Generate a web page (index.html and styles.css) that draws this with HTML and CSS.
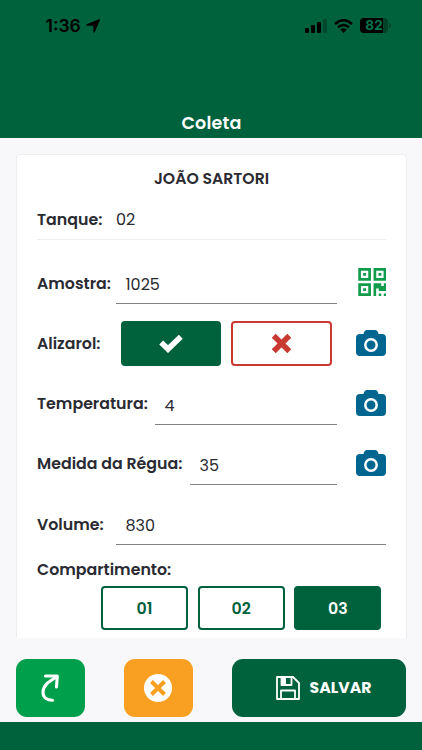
FILE: index.html
```html
<!DOCTYPE html>
<html lang="pt-BR">
<head>
<meta charset="utf-8">
<meta name="viewport" content="width=device-width, initial-scale=1">
<title>Coleta</title>
<link rel="stylesheet" href="styles.css">
</head>
<body>
<svg class="defs" aria-hidden="true">
  <symbol id="camera" viewBox="0 0 30 26">
    <path fill="#00658f" d="M4 4h3.400l1-2.400Q9 0 10.800 0h8.400q1.800 0 2.400 1.600L22.600 4H26q4 0 4 4v14q0 4-4 4H4q-4 0-4-4V8q0-4 4-4z"/>
    <circle cx="15" cy="15" r="5.700" fill="none" stroke="#fff" stroke-width="2.500"/>
  </symbol>
</svg>
<header class="top">
  <div class="status">
    <span class="time">1:36</span>
    <svg class="location" viewBox="0 0 14 14"><path d="M13 .2Q14.200 0 13.800 1.200L8.800 13Q7.900 14.500 7.400 13V7.200Q7.300 6.700 6.700 6.700H1Q-.5 6.100.8 5.200z"/></svg>
    <svg class="signal" viewBox="0 0 22 14"><rect y="9" width="4" height="5" rx="1"/><rect x="6" y="6" width="4" height="8" rx="1"/><rect x="12" y="3" width="4" height="11" rx="1"/><rect x="18" width="4" height="14" rx="1" opacity=".25"/></svg>
    <svg class="wifi" viewBox="0 0 19 14"><g fill="none" stroke="#000" stroke-width="2.500"><path d="M1 5Q9.500-2.600 18 5"/><path d="M4 8.300Q9.500 3.600 15 8.300"/></g><path d="M6.300 10.600Q9.500 8 12.700 10.600L9.500 14z"/></svg>
    <span class="battery">82</span><span class="nub"></span>
  </div>
  <h1 class="page-title">Coleta</h1>
</header>
<main class="content">
  <section class="card">
    <h2 class="producer">JOÃO SARTORI</h2>
    <div class="row tank"><span class="label l-tank">Tanque:</span><span class="plain">02</span></div>
    <div class="row sample">
      <span class="label l-sample">Amostra:</span><span class="field v-sample">1025</span>
      <svg class="qr" viewBox="0 0 28 28"><g fill="none" stroke="#119c4b" stroke-width="2.700"><path d="M1.350 1.350h10v10h-10zM16.650 1.350h10v10h-10zM1.350 16.650h10v10h-10z"/></g><path fill="#119c4b" d="M4.900 4.900h2.900v2.900H4.900zM20.200 4.900h2.900v2.900h-2.900zM4.900 20.200h2.900v2.900H4.900zM15.300 15.300h7.700v2.700h2.500v-2.700H28V23h-7.500v-2.500h-2.600V28h-2.600zM20.500 25.500H23V28h-2.500zM25.500 25.500H28V28h-2.500z"/></svg>
    </div>
    <div class="row alizarol">
      <span class="label l-aliz">Alizarol:</span>
      <button class="choice yes" aria-label="Sim"><svg viewBox="0 0 24 19"><path d="M2.200 8.500l6.800 6.500L21.800 2.700" fill="none" stroke="#fff" stroke-width="5.600"/></svg></button>
      <button class="choice no" aria-label="Não"><svg viewBox="0 0 19 19"><path d="M3.700 3.700l11.600 11.600M15.300 3.700L3.700 15.300" fill="none" stroke="#c83a31" stroke-width="5.600" stroke-linecap="square"/></svg></button>
      <svg class="camera"><use href="#camera"/></svg>
    </div>
    <div class="row temp"><span class="label l-temp">Temperatura:</span><span class="field">4</span><svg class="camera"><use href="#camera"/></svg></div>
    <div class="row ruler"><span class="label l-ruler">Medida da Régua:</span><span class="field v-ruler">35</span><svg class="camera"><use href="#camera"/></svg></div>
    <div class="row volume"><span class="label l-volume">Volume:</span><span class="field v-volume">830</span></div>
    <div class="label l-comp">Compartimento:</div>
    <div class="compartments"><button class="comp c1">01</button><button class="comp">02</button><button class="comp selected">03</button></div>
  </section>
</main>
<footer class="actions">
  <button class="action redo" aria-label="Refazer"><svg viewBox="0 0 18 28"><g fill="none" stroke="#fff" stroke-width="3.100" stroke-linecap="round" stroke-linejoin="round"><path d="M4.500 2h11.800l-.8 11"/><path d="M15.500 3C9 7 2 10.500 2 18.500c0 4.500 3.500 7.700 9.500 7.700"/></g></svg></button>
  <button class="action cancel" aria-label="Cancelar"><svg viewBox="0 0 28 28"><circle cx="14" cy="14" r="14" fill="#fff"/><path d="M7.500 7.500l13 13M20.500 7.500l-13 13" stroke="#f9a023" stroke-width="4"/></svg></button>
  <button class="action save"><svg viewBox="0 0 24 24"><g fill="none" stroke="#fff" stroke-width="1.800" stroke-linejoin="round"><path d="M1 1h16l6 6v16H1z"/><path d="M5.500 1v8h10V1M5 23v-8.500h14V23"/></g><path fill="#fff" d="M5.500 1H10v7H5.500z"/></svg><span class="save-text">SALVAR</span></button>
</footer>
<div class="bottom"></div>
</body>
</html>
```
FILE: styles.css
```css
* { box-sizing: border-box; }
body { margin: 0; width: 422px; height: 750px; overflow: hidden; display: flex; flex-direction: column; background: #f8f8fa; color: #2a2a32; font-family: Poppins, Inter, sans-serif; }
button { font: inherit; padding: 0; margin: 0; display: flex; align-items: center; justify-content: center; }
svg { display: block; flex: none; }
.defs { position: absolute; width: 0; height: 0; }
.top { height: 137.5px; flex: none; background: #00613d; }
.status { height: 50px; padding: 1px 0 0 45.500px; display: flex; align-items: center; }
.status svg { fill: #000; }
.time { width: 40.500px; padding-top: 1px; font-family: Inter, sans-serif; font-size: 17.500px; font-weight: 600; color: #000; line-height: 18px; white-space: nowrap; }
.location { width: 14px; height: 14px; }
.signal { width: 22px; height: 14px; margin-left: 204.500px; }
.wifi { width: 19px; height: 14px; margin-left: 7.500px; }
.battery { width: 28px; height: 15px; margin-left: 7px; border-radius: 4px; background: linear-gradient(90deg, #000 83%, #004129 83%); color: #04744b; font-family: Inter, sans-serif; font-size: 13.500px; line-height: 15px; font-weight: 700; text-align: center; }
.nub { width: 2px; height: 5px; margin-left: 1px; background: #004129; border-radius: 0 2px 2px 0; }
.page-title { margin: 60.500px 0 0 1px; text-align: center; color: #fff; font-size: 17.500px; line-height: 25px; font-weight: 600; letter-spacing: .2px; }
.content { height: 500.500px; flex: none; padding: 16px 15.500px 0 16px; overflow: hidden; }
.card { height: 520px; padding: 11px 19.500px 0 20px; background: #fff; border: 1px solid #ededf0; border-radius: 4px; }
.producer { margin: 0; height: 26px; text-align: center; line-height: 26px; font-size: 15.700px; font-weight: 600; }
.row { display: flex; align-items: center; }
.label { flex: none; font-size: 15.800px; font-weight: 600; line-height: 24px; white-space: nowrap; }
.plain, .field { font-size: 16px; line-height: 24px; font-weight: 400; }
.tank { height: 42px; margin-top: 6.500px; padding-top: 2px; border-bottom: 1.500px solid #eeeef0; }
.l-tank { width: 79px; }
.sample { height: 44.500px; margin-top: 20px; }
.field { height: 44px; padding: 13px 0 0 9.500px; flex: none; width: 221px; border-bottom: 1.500px solid #808085; }
.l-sample, .l-volume { width: 79px; }
.l-sample, .l-temp, .l-ruler, .l-volume { padding-top: 3px; }
.qr { width: 28.500px; height: 28px; margin-left: auto; }
.alizarol { height: 45px; margin-top: 16.500px; }
.l-aliz { width: 83.500px; }
.choice { width: 100.500px; height: 44.500px; border-radius: 4px; margin-right: 10px; }
.yes { background: #00613d; border: 0; }
.yes svg { width: 24px; height: 19px; }
.no { background: #fff; border: 2px solid #c83a31; }
.no svg { width: 19px; height: 19px; }
.camera { width: 30px; height: 26px; margin-left: auto; }
.alizarol .camera { margin-top: -2px; }
.temp { height: 44.500px; margin-top: 14.500px; }
.l-temp { width: 118px; }
.temp .field { width: 182px; }
.ruler { height: 44.500px; margin-top: 15.500px; }
.l-ruler { width: 153px; }
.ruler .field { width: 147px; }
.volume { height: 44.500px; margin-top: 16px; }
.volume .field { width: 270px; }
.l-comp { margin-top: 12.500px; }
.compartments { display: flex; gap: 9.700px; padding-left: 64px; margin-top: 4px; }
.comp { width: 87px; height: 44px; border: 2px solid #00613d; border-radius: 4px; background: #fff; color: #00613d; font-size: 15.800px; font-weight: 600; }
.selected { background: #00613d; color: #fff; }
.actions { height: 84px; flex: none; padding: 20.500px 16px 0 15.500px; display: flex; align-items: flex-start; }
.action { height: 58px; border: 0; border-radius: 11px; }
.redo { width: 69px; background: #009f4b; }
.redo svg { width: 18px; height: 28px; }
.cancel { width: 69px; margin-left: 39px; background: #f9a023; }
.cancel svg { width: 28px; height: 28px; }
.save { width: 174px; margin-left: auto; padding-left: 9px; background: #00613d; color: #fff; gap: 10px; }
.save svg { width: 24px; height: 24px; }
.save-text { font-size: 15.700px; font-weight: 700; }
.bottom { flex: 1; background: #00613d; }
```
